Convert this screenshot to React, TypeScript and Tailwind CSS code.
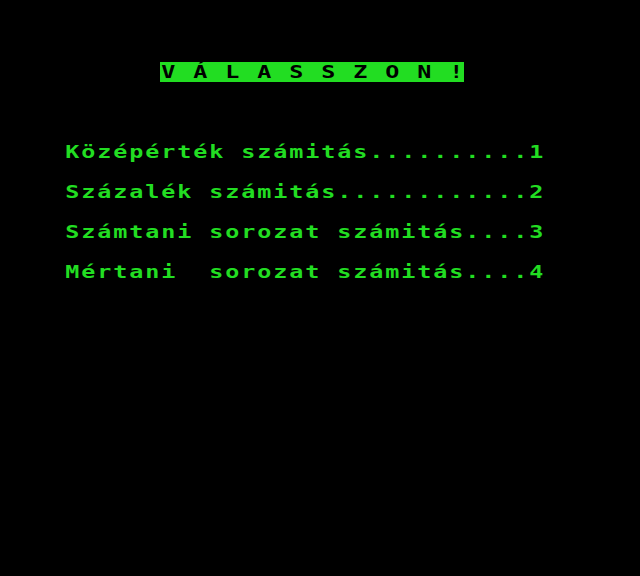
import React from 'react';

const menu = [
  'Középérték számitás..........1',
  'Százalék számitás............2',
  'Számtani sorozat számitás....3',
  'Mértani  sorozat számitás....4',
];

// one character per 16px cell, like a 40-column text screen
function ScreenText({ text }: { text: string }) {
  return (
    <div className="flex h-5 items-center">
      {Array.from(text).map((ch, i) => (
        <span key={i} className="inline-block w-4 text-center whitespace-pre">
          <span className="inline-block scale-x-[1.3]">{ch}</span>
        </span>
      ))}
    </div>
  );
}

export default function App() {
  return (
    <div
      className="w-[640px] h-[576px] bg-black text-[#22dd22] font-bold text-[18px] leading-5 overflow-hidden"
      style={{ fontFamily: '"DejaVu Sans Mono", "Liberation Mono", monospace' }}
    >
      <div className="pt-[62px] pl-[160px]">
        <div className="inline-block bg-[#22dd22] text-black">
          <ScreenText text="V Á L A S S Z O N !" />
        </div>
      </div>
      <div className="mt-[60px] pl-16 flex flex-col gap-5">
        {menu.map(line => (
          <ScreenText key={line} text={line} />
        ))}
      </div>
    </div>
  );
}
